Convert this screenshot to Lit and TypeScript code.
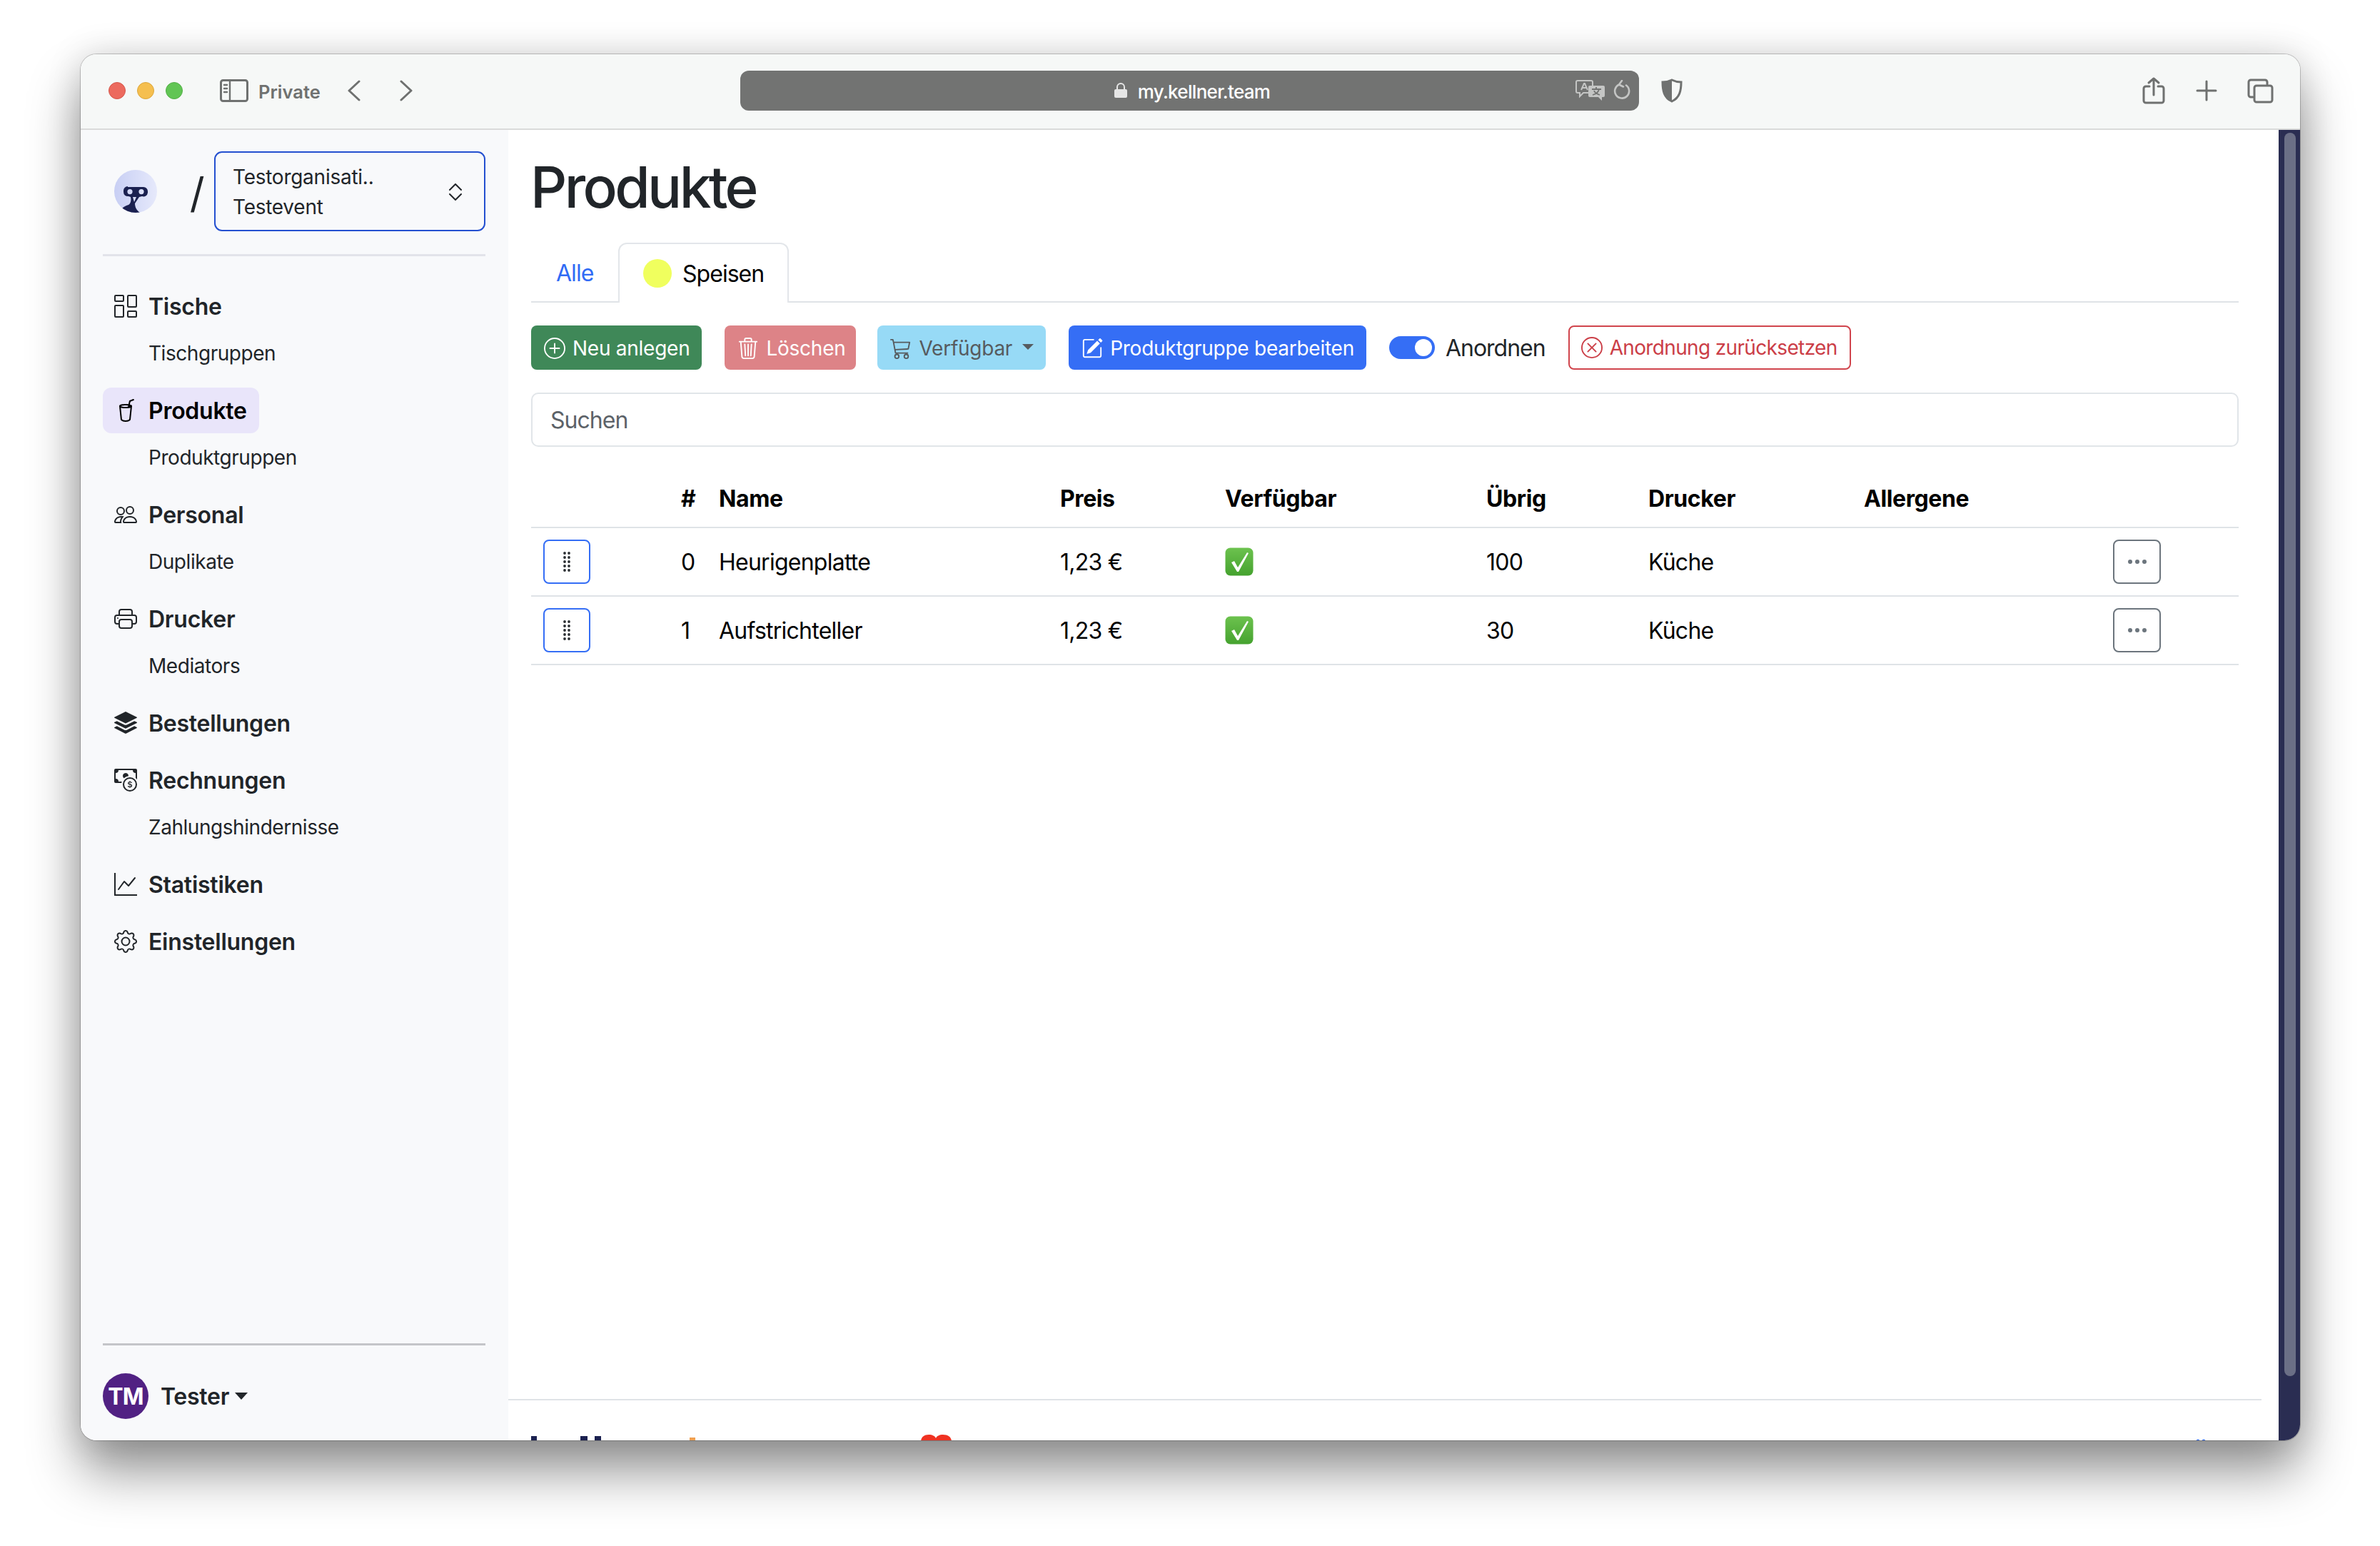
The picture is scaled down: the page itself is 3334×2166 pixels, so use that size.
import { LitElement, html, css, svg } from "lit";
import { customElement } from "lit/decorators.js";

const I: Record<string, string[]> = {
  gap: ["M6 1v3H1V1h5zM1 0a1 1 0 0 0-1 1v3a1 1 0 0 0 1 1h5a1 1 0 0 0 1-1V1a1 1 0 0 0-1-1H1zm14 12v3h-5v-3h5zm-5-1a1 1 0 0 0-1 1v3a1 1 0 0 0 1 1h5a1 1 0 0 0 1-1v-3a1 1 0 0 0-1-1h-5zM6 8v7H1V8h5zM1 7a1 1 0 0 0-1 1v7a1 1 0 0 0 1 1h5a1 1 0 0 0 1-1V8a1 1 0 0 0-1-1H1zm14-6v7h-5V1h5zm-5-1a1 1 0 0 0-1 1v7a1 1 0 0 0 1 1h5a1 1 0 0 0 1-1V1a1 1 0 0 0-1-1h-5z"],
  cup: ["M13.902.334a.5.5 0 0 1-.28.65l-2.254.902-.4 1.927c.376.095.715.215.972.367.228.135.56.396.56.82 0 .046-.004.09-.011.132l-.962 9.068a1.28 1.28 0 0 1-.524.93c-.488.34-1.494.87-3.01.87-1.516 0-2.522-.53-3.01-.87a1.28 1.28 0 0 1-.524-.93L3.51 5.132A.78.78 0 0 1 3.5 5c0-.424.332-.685.56-.82.262-.154.607-.276.99-.372C5.824 3.614 6.867 3.5 8 3.5c.712 0 1.389.045 1.985.127l.464-2.215a.5.5 0 0 1 .303-.356l2.5-1a.5.5 0 0 1 .65.278zM9.768 4.607A13.991 13.991 0 0 0 8 4.5c-1.076 0-2.033.11-2.707.278A3.284 3.284 0 0 0 4.645 5c.146.073.362.15.648.222C5.967 5.39 6.924 5.5 8 5.5c.571 0 1.109-.03 1.588-.085l.18-.808zm.292 1.756C9.445 6.45 8.742 6.5 8 6.5c-1.133 0-2.176-.114-2.95-.308a5.514 5.514 0 0 1-.435-.127l.838 8.03c.013.121.06.186.102.215.357.249 1.168.69 2.438.69 1.27 0 2.081-.441 2.438-.69.042-.029.09-.094.102-.215l.852-8.03a5.517 5.517 0 0 1-.435.127 8.88 8.88 0 0 1-.89.17z"],
  people: ["M15 14s1 0 1-1-1-4-5-4-5 3-5 4 1 1 1 1h8zm-7.978-1A.261.261 0 0 1 7 12.996c.001-.264.167-1.03.76-1.72C8.312 10.629 9.282 10 11 10c1.717 0 2.687.63 3.24 1.276.593.69.758 1.457.76 1.72l-.008.002a.274.274 0 0 1-.014.002H7.022zM11 7a2 2 0 1 0 0-4 2 2 0 0 0 0 4zm3-2a3 3 0 1 1-6 0 3 3 0 0 1 6 0zM6.936 9.28a5.88 5.88 0 0 0-1.23-.247A7.35 7.35 0 0 0 5 9c-4 0-5 3-5 4 0 .667.333 1 1 1h4.216A2.238 2.238 0 0 1 5 13c0-1.01.377-2.042 1.09-2.904.243-.294.526-.569.846-.816zM4.92 10A5.493 5.493 0 0 0 4 13H1c0-.26.164-1.03.76-1.724.545-.636 1.492-1.256 3.16-1.275zM1.5 5.5a3 3 0 1 1 6 0 3 3 0 0 1-6 0zm3-2a2 2 0 1 0 0 4 2 2 0 0 0 0-4z"],
  printer: ["M2.5 8a.5.5 0 1 0 0-1 .5.5 0 0 0 0 1z", "M5 1a2 2 0 0 0-2 2v2H2a2 2 0 0 0-2 2v3a2 2 0 0 0 2 2h1v1a2 2 0 0 0 2 2h6a2 2 0 0 0 2-2v-1h1a2 2 0 0 0 2-2V7a2 2 0 0 0-2-2h-1V3a2 2 0 0 0-2-2H5zM4 3a1 1 0 0 1 1-1h6a1 1 0 0 1 1 1v2H4V3zm1 5a2 2 0 0 0-2 2v1H2a1 1 0 0 1-1-1V7a1 1 0 0 1 1-1h12a1 1 0 0 1 1 1v3a1 1 0 0 1-1 1h-1v-1a2 2 0 0 0-2-2H5zm7 2v3a1 1 0 0 1-1 1H5a1 1 0 0 1-1-1v-3a1 1 0 0 1 1-1h6a1 1 0 0 1 1 1z"],
  stack: ["m14.12 10.163 1.715.858c.22.11.22.424 0 .534L8.267 15.34a.598.598 0 0 1-.534 0L.165 11.555a.299.299 0 0 1 0-.534l1.716-.858 5.317 2.659c.505.252 1.1.252 1.604 0l5.317-2.66zM7.733.063a.598.598 0 0 1 .534 0l7.568 3.784a.3.3 0 0 1 0 .535L8.267 8.165a.598.598 0 0 1-.534 0L.165 4.382a.299.299 0 0 1 0-.535L7.733.063z", "m14.12 6.576 1.715.858c.22.11.22.424 0 .534l-7.568 3.784a.598.598 0 0 1-.534 0L.165 7.968a.299.299 0 0 1 0-.534l1.716-.858 5.317 2.659c.505.252 1.1.252 1.604 0l5.317-2.659z"],
  coin: ["M11 15a4 4 0 1 0 0-8 4 4 0 0 0 0 8zm5-4a5 5 0 1 1-10 0 5 5 0 0 1 10 0z", "M9.438 11.944c.047.596.518 1.06 1.363 1.116v.44h.375v-.443c.875-.061 1.386-.529 1.386-1.207 0-.618-.39-.936-1.09-1.1l-.296-.07v-1.2c.376.043.614.248.671.532h.658c-.047-.575-.54-1.024-1.329-1.073V8.5h-.375v.45c-.747.073-1.255.522-1.255 1.158 0 .562.378.92 1.007 1.066l.248.061v1.272c-.384-.058-.639-.27-.696-.563h-.668zm1.36-1.354c-.369-.085-.569-.26-.569-.522 0-.294.216-.514.572-.578v1.1h-.003zm.432.746c.449.104.655.272.655.569 0 .339-.257.571-.709.614v-1.195l.054.012z", "M1 0a1 1 0 0 0-1 1v8a1 1 0 0 0 1 1h4.083c.058-.344.145-.678.258-1H3a2 2 0 0 0-2-2V3a2 2 0 0 0 2-2h10a2 2 0 0 0 2 2v3.528c.38.34.717.728 1 1.154V1a1 1 0 0 0-1-1H1z", "M9.998 5.083 10 5a2 2 0 1 0-3.132 1.65 5.982 5.982 0 0 1 3.13-1.567z"],
  graph: ["M0 0h1v15h15v1H0V0Zm14.817 3.113a.5.5 0 0 1 .07.704l-4.5 5.5a.5.5 0 0 1-.74.037L7.06 6.767l-3.656 5.027a.5.5 0 0 1-.808-.588l4-5.5a.5.5 0 0 1 .758-.06l2.609 2.61 4.15-5.073a.5.5 0 0 1 .704-.07Z"],
  gear: ["M8 4.754a3.246 3.246 0 1 0 0 6.492 3.246 3.246 0 0 0 0-6.492zM5.754 8a2.246 2.246 0 1 1 4.492 0 2.246 2.246 0 0 1-4.492 0z", "M9.796 1.343c-.527-1.79-3.065-1.79-3.592 0l-.094.319a.873.873 0 0 1-1.255.52l-.292-.16c-1.64-.892-3.433.902-2.54 2.541l.159.292a.873.873 0 0 1-.52 1.255l-.319.094c-1.79.527-1.79 3.065 0 3.592l.319.094a.873.873 0 0 1 .52 1.255l-.16.292c-.892 1.64.901 3.434 2.541 2.54l.292-.159a.873.873 0 0 1 1.255.52l.094.319c.527 1.79 3.065 1.79 3.592 0l.094-.319a.873.873 0 0 1 1.255-.52l.292.16c1.64.893 3.434-.902 2.54-2.541l-.159-.292a.873.873 0 0 1 .52-1.255l.319-.094c1.79-.527 1.79-3.065 0-3.592l-.319-.094a.873.873 0 0 1-.52-1.255l.16-.292c.893-1.64-.902-3.433-2.541-2.54l-.292.159a.873.873 0 0 1-1.255-.52l-.094-.319zm-2.633.283c.246-.835 1.428-.835 1.674 0l.094.319a1.873 1.873 0 0 0 2.693 1.115l.291-.16c.764-.415 1.6.42 1.184 1.185l-.159.292a1.873 1.873 0 0 0 1.116 2.692l.318.094c.835.246.835 1.428 0 1.674l-.319.094a1.873 1.873 0 0 0-1.115 2.693l.16.291c.415.764-.42 1.6-1.185 1.184l-.291-.159a1.873 1.873 0 0 0-2.693 1.116l-.094.318c-.246.835-1.428.835-1.674 0l-.094-.319a1.873 1.873 0 0 0-2.692-1.115l-.292.16c-.764.415-1.6-.42-1.184-1.185l.159-.291A1.873 1.873 0 0 0 1.945 8.93l-.319-.094c-.835-.246-.835-1.428 0-1.674l.319-.094A1.873 1.873 0 0 0 3.06 4.377l-.16-.292c-.415-.764.42-1.6 1.185-1.184l.292.159a1.873 1.873 0 0 0 2.692-1.115l.094-.319z"],
  plus: ["M8 15A7 7 0 1 1 8 1a7 7 0 0 1 0 14zm0 1A8 8 0 1 0 8 0a8 8 0 0 0 0 16z", "M8 4a.5.5 0 0 1 .5.5v3h3a.5.5 0 0 1 0 1h-3v3a.5.5 0 0 1-1 0v-3h-3a.5.5 0 0 1 0-1h3v-3A.5.5 0 0 1 8 4z"],
  trash: ["M6.5 1h3a.5.5 0 0 1 .5.5v1H6v-1a.5.5 0 0 1 .5-.5ZM11 2.5v-1A1.5 1.5 0 0 0 9.5 0h-3A1.5 1.5 0 0 0 5 1.5v1H2.506a.58.58 0 0 0-.01 0H1.5a.5.5 0 0 0 0 1h.538l.853 10.66A2 2 0 0 0 4.885 16h6.23a2 2 0 0 0 1.994-1.84l.853-10.66h.538a.5.5 0 0 0 0-1h-.995a.59.59 0 0 0-.01 0H11Zm1.958 1-.846 10.58a1 1 0 0 1-.997.92h-6.23a1 1 0 0 1-.997-.92L3.042 3.5h9.916Zm-7.487 1a.5.5 0 0 1 .528.47l.5 8.5a.5.5 0 0 1-.998.06L5 5.03a.5.5 0 0 1 .47-.53Zm5.058 0a.5.5 0 0 1 .47.53l-.5 8.5a.5.5 0 1 1-.998-.06l.5-8.5a.5.5 0 0 1 .528-.47ZM8 4.5a.5.5 0 0 1 .5.5v8.5a.5.5 0 0 1-1 0V5a.5.5 0 0 1 .5-.5Z"],
  cart: ["M0 1.5A.5.5 0 0 1 .5 1H2a.5.5 0 0 1 .485.379L2.89 3H14.5a.5.5 0 0 1 .49.598l-1 5a.5.5 0 0 1-.465.401l-9.397.472L4.415 11H13a.5.5 0 0 1 0 1H4a.5.5 0 0 1-.491-.408L2.01 3.607 1.61 2H.5a.5.5 0 0 1-.5-.5zM3.102 4l.84 4.479 9.144-.459L13.89 4H3.102zM5 12a2 2 0 1 0 0 4 2 2 0 0 0 0-4zm7 0a2 2 0 1 0 0 4 2 2 0 0 0 0-4zm-7 1a1 1 0 1 1 0 2 1 1 0 0 1 0-2zm7 0a1 1 0 1 1 0 2 1 1 0 0 1 0-2z"],
  pencil: ["M15.502 1.94a.5.5 0 0 1 0 .706L14.459 3.69l-2-2L13.502.646a.5.5 0 0 1 .707 0l1.293 1.293zm-1.75 2.456-2-2L4.939 9.21a.5.5 0 0 0-.121.196l-.805 2.414a.25.25 0 0 0 .316.316l2.414-.805a.5.5 0 0 0 .196-.12l6.813-6.814z", "M1 13.5A1.5 1.5 0 0 0 2.5 15h11a1.5 1.5 0 0 0 1.5-1.5v-6a.5.5 0 0 0-1 0v6a.5.5 0 0 1-.5.5h-11a.5.5 0 0 1-.5-.5v-11a.5.5 0 0 1 .5-.5H9a.5.5 0 0 0 0-1H2.5A1.5 1.5 0 0 0 1 2.5v11z"],
  xc: ["M8 15A7 7 0 1 1 8 1a7 7 0 0 1 0 14zm0 1A8 8 0 1 0 8 0a8 8 0 0 0 0 16z", "M4.646 4.646a.5.5 0 0 1 .708 0L8 7.293l2.646-2.647a.5.5 0 0 1 .708.708L8.707 8l2.647 2.646a.5.5 0 0 1-.708.708L8 8.707l-2.646 2.647a.5.5 0 0 1-.708-.708L7.293 8 4.646 5.354a.5.5 0 0 1 0-.708z"],
  dots: ["M3 9.5a1.5 1.5 0 1 1 0-3 1.5 1.5 0 0 1 0 3zm5 0a1.5 1.5 0 1 1 0-3 1.5 1.5 0 0 1 0 3zm5 0a1.5 1.5 0 1 1 0-3 1.5 1.5 0 0 1 0 3z"],
};

const bi = (n: string, cls = "ic") =>
  html`<svg class=${cls} viewBox="0 0 16 16" fill="currentColor">${I[n].map((d) => svg`<path d=${d} fill-rule="evenodd"></path>`)}</svg>`;

const NAV: { icon: string; label: string; sub?: string; active?: boolean }[] = [
  { icon: "gap", label: "Tische", sub: "Tischgruppen" },
  { icon: "cup", label: "Produkte", sub: "Produktgruppen", active: true },
  { icon: "people", label: "Personal", sub: "Duplikate" },
  { icon: "printer", label: "Drucker", sub: "Mediators" },
  { icon: "stack", label: "Bestellungen" },
  { icon: "coin", label: "Rechnungen", sub: "Zahlungshindernisse" },
  { icon: "graph", label: "Statistiken" },
  { icon: "gear", label: "Einstellungen" },
];

const ROWS = [
  { n: "0", name: "Heurigenplatte", left: "100" },
  { n: "1", name: "Aufstrichteller", left: "30" },
];

const checkIcon = html`<svg class="check" viewBox="0 0 40 40">
  <defs><linearGradient id="g" x1="0" y1="0" x2="0" y2="1"><stop offset="0" stop-color="#6cc24e"></stop><stop offset="1" stop-color="#45a22f"></stop></linearGradient></defs>
  <rect x="0.5" y="0.5" width="39" height="39" rx="7" fill="url(#g)"></rect>
  <path d="M9 21 L13 19 L18 28 L31 7 L33 8 L19 34 L17 34 Z" fill="#fff"></path>
</svg>`;

const gripIcon = html`<svg class="grip" viewBox="0 0 10 28" fill="#2b2f33">
  ${[2, 8, 14, 20, 26].map((y) => svg`<circle cx="2" cy=${y} r="1.9"></circle><circle cx="8" cy=${y} r="1.9"></circle>`)}
</svg>`;

@customElement("app-root")
export class AppRoot extends LitElement {
  static styles = css`
    :host { display: block; background: #fff; font-family: Inter, "Liberation Sans", sans-serif; color: #212529; letter-spacing: -0.256px; }
    * { box-sizing: border-box; }
    .page { width: 3334px; height: 2166px; padding: 76px 112px 148px 113px; overflow: hidden; }
    .win { width: 3109px; height: 1942px; border-radius: 22px; overflow: hidden; display: flex; flex-direction: column; background: #fff;
      box-shadow: 0 0 0 1px rgba(0,0,0,.2), 0 44px 72px rgba(0,0,0,.42), 0 0 50px rgba(0,0,0,.14); }
    .bar { height: 106px; flex: none; background: #f6f8f7; border-bottom: 2px solid #dadbda; display: flex; align-items: center; color: #6f7170; padding-bottom: 2px; }
    .lights { display: flex; gap: 16px; margin-left: 39px; }
    .light { width: 24px; height: 24px; border-radius: 50%; }
    .r { background: #ec6a5e; border: 1px solid #d5574c; }
    .y { background: #f5bf4f; border: 1px solid #dca63c; }
    .g { background: #61c554; border: 1px solid #53ae47; }
    .tb { flex: none; display: block; fill: none; stroke: #6f7170; stroke-width: 3; stroke-linecap: round; stroke-linejoin: round; }
    .side-ic { width: 40px; height: 32px; margin-left: 52px; }
    .private { font-size: 25.5px; font-weight: 600; margin: 2px 0 0 14px; width: 88px; white-space: nowrap; letter-spacing: 0; }
    .chev { width: 20px; height: 30px; }
    .back { margin-left: 36px; }
    .fwd { margin-left: 53px; }
    .url { width: 1259px; height: 56px; margin-left: 458px; background: #727372; border-radius: 12px; display: grid; grid-template-columns: 1fr auto 1fr; align-items: center; color: #fff; }
    .url-c { display: flex; align-items: center; gap: 14px; margin-left: 6px; font-size: 26px; font-weight: 500; letter-spacing: -0.7px; grid-column: 2; }
    .url-c span { padding-top: 2px; }
    .lock { width: 20px; height: 24px; }
    .url-r { display: flex; justify-content: flex-end; align-items: center; gap: 10px; padding-right: 11px; }
    .tr { width: 42px; height: 30px; }
    .rl { width: 26px; height: 30px; fill: none; stroke: #c4c5c4; stroke-width: 2.6; stroke-linecap: round; stroke-linejoin: round; }
    .shield { width: 30px; height: 34px; margin-left: 31px; }
    .share { width: 32px; height: 38px; margin-left: 644px; }
    .addt { width: 30px; height: 30px; margin-left: 43px; }
    .tabs-ic { width: 37px; height: 35px; margin-left: 42px; }

    .body { flex: 1; min-height: 0; display: flex; }
    .side { width: 599px; flex: none; background: #f8f9fb; padding: 30px 32px 30px 31px; display: flex; flex-direction: column; }
    .org { display: flex; align-items: center; height: 112px; flex: none; }
    .logo { width: 60px; height: 60px; margin-left: 16px; flex: none; display: block; }
    .slash { width: 80px; padding: 4px 0 0 32px; text-align: center; font-size: 58px; font-weight: 400; line-height: 1; color: #212529; }
    .sel { width: 380px; height: 112px; border: 2.5px solid #2450d0; border-radius: 11px; padding: 13px 0 0 24px; display: flex; justify-content: space-between; font-size: 28px; line-height: 42px; color: #212529; }
    .updown { width: 20px; height: 24px; margin: 30px 30px 0 0; fill: none; stroke: #212529; stroke-width: 2; stroke-linecap: round; stroke-linejoin: round; }
    .rule { height: 3px; background: #e2e3ea; margin-top: 32px; flex: none; }
    nav { margin-top: 38px; display: flex; flex-direction: column; gap: 16px; }
    .head { display: flex; width: fit-content; align-items: center; gap: 16px; height: 64px; padding: 0 17px 0 16px; border-radius: 12px; font-size: 32px; font-weight: 600; color: #212529; }
    .head.on { background: #e9e5fa; color: #000; }
    .ic { width: 32px; height: 32px; flex: none; display: block; }
    .sub { height: 64px; margin-top: 2px; line-height: 64px; font-size: 28px; letter-spacing: -0.45px; padding-left: 64px; color: #212529; }
    .user { margin-top: auto; border-top: 3px solid #c4c5c9; padding-top: 39px; display: flex; align-items: center; gap: 17px; font-size: 32px; font-weight: 600; }
    .av { width: 64px; height: 64px; border-radius: 50%; background: #512183; color: #fff; display: flex; align-items: center; justify-content: center; flex: none; font-weight: 700; letter-spacing: -0.03em; }
    .name { display: flex; align-items: center; gap: 8px; }
    .caret { width: 0; height: 0; border-left: 9.5px solid transparent; border-right: 9.5px solid transparent; border-top: 10px solid currentColor; }

    main { flex: 1; min-width: 0; display: flex; flex-direction: column; overflow: hidden; }
    .content { flex: 1; padding: 32px 56px 0 32px; }
    h1 { margin: 0 0 30px -1px; font-size: 80px; line-height: 96px; font-weight: 500; letter-spacing: -3.6px; color: #212529; }
    .tabs { display: flex; border-bottom: 2px solid #dfe3e7; height: 84px; }
    .tab { height: 84px; display: flex; align-items: center; font-size: 32px; letter-spacing: -0.03em; }
    .all { width: 118px; padding-left: 35px; color: #306bf5; }
    .spe { margin-left: 4px; width: 239px; padding: 0 32px 0 33px; gap: 15px; color: #000; background: #fff; border: 2px solid #e3e6ea; border-bottom: none; border-radius: 12px 12px 0 0; }
    .dot { width: 40px; height: 40px; border-radius: 50%; background: #f0ff5e; flex: none; }
    .acts { display: flex; align-items: center; gap: 32px; margin-top: 32px; height: 62px; }
    .btn { height: 62px; display: flex; align-items: center; gap: 10px; padding: 1px 17px 0 18px; border-radius: 8px; font-size: 28px; white-space: nowrap; color: #fff; }
    .btn .ic { width: 30px; height: 30px; }
    .new { background: #3f8858; }
    .del { background: #dd8387; padding-right: 15px; }
    .av-btn { background: #97daf6; color: #565b5f; margin-left: -2px; }
    .edit { background: #356ef5; }
    .bcaret { width: 0; height: 0; border-left: 8px solid transparent; border-right: 8px solid transparent; border-top: 8px solid #565b5f; margin: -4px 0 0 4px; }
    .switch { display: flex; align-items: center; gap: 15px; font-size: 32px; letter-spacing: -1px; color: #212529; }
    .track { width: 64px; height: 32px; border-radius: 16px; background: #356ef5; display: flex; align-items: center; justify-content: flex-end; padding-right: 4px; }
    .knob { width: 24px; height: 24px; border-radius: 50%; background: #fff; }
    .reset { border: 2px solid #d0454d; color: #cb3e47; background: #fff; padding: 0 17px 0 16px; letter-spacing: -0.65px; }
    .search { margin-top: 32px; height: 76px; border: 2px solid #e1e5e9; border-radius: 10px; display: flex; align-items: center; padding-left: 25px; font-size: 32px; letter-spacing: -0.03em; color: #5c6268; }
    .table { margin-top: 32px; }
    .row { display: grid; grid-template-columns: 193px 54px 477px 231px 366px 227px 302px 349px 193px; border-bottom: 2px solid #dfe3e7; align-items: center; color: #000; font-size: 32px; letter-spacing: -0.75px; height: 96px; }
    .row > div { padding-left: 17px; }
    .row > .nm { padding-left: 16px; }
    .thead { height: 82px; font-weight: 700; letter-spacing: -0.4px; }
    .ibtn { width: 66px; height: 62px; border-radius: 8px; border: 2.5px solid #356ef5; display: flex; align-items: center; justify-content: center; }
    .ibtn.more { border-color: #6c757d; color: #6c757d; width: 67px; }
    .grip { width: 10px; height: 28px; display: block; }
    .check { width: 40px; height: 40px; display: block; }
    footer { height: 58px; flex: none; margin-right: 24px; border-top: 2px solid #dfe3e7; overflow: hidden; }
    .marks { display: block; width: 2456px; height: 58px; }
    .scroll { width: 30px; flex: none; background: #2a2d52; padding: 4px 6px 90px 8px; display: flex; }
    .thumb { flex: 1; background: #6b6f86; border-radius: 8px; }
  `;

  private chrome() {
    return html`<div class="bar">
      <div class="lights"><div class="light r"></div><div class="light y"></div><div class="light g"></div></div>
      <svg class="tb side-ic" viewBox="0 0 40 32"><rect x="1.5" y="1.5" width="37" height="29" rx="3"></rect><path d="M14 2v28M6 8h4M6 13h4M6 18h4" stroke-width="2.4"></path></svg>
      <div class="private">Private</div>
      <svg class="tb chev back" viewBox="0 0 20 30"><path d="M17 2 3 15l14 13"></path></svg>
      <svg class="tb chev fwd" viewBox="0 0 20 30"><path d="M3 2l14 13L3 28"></path></svg>
      <div class="url">
        <div class="url-c">
          <svg class="lock" viewBox="0 0 20 24" fill="#e6e6e6"><path d="M3 10h14a2 2 0 0 1 2 2v8a2 2 0 0 1-2 2H3a2 2 0 0 1-2-2v-8a2 2 0 0 1 2-2z"></path><path d="M5 11V7a5 5 0 0 1 10 0v4" fill="none" stroke="#e6e6e6" stroke-width="2"></path></svg>
          <span>my.kellner.team</span>
        </div>
        <div class="url-r">
          <svg class="tr" viewBox="0 0 42 30">
            <path d="M3 1h19a2 2 0 0 1 2 2v13a2 2 0 0 1-2 2H11l-5 5v-5H3a2 2 0 0 1-2-2V3a2 2 0 0 1 2-2z" fill="none" stroke="#c4c5c4" stroke-width="2"></path>
            <path d="M8 14l4-9h1l4 9M10 11h5" fill="none" stroke="#c4c5c4" stroke-width="2"></path>
            <path d="M20 8h19a2 2 0 0 1 2 2v12a2 2 0 0 1-2 2h-2v5l-5-5H20a2 2 0 0 1-2-2V10a2 2 0 0 1 2-2z" fill="#c4c5c4"></path>
            <path d="M23 13h13M29 10v3M33 13c-1 5-5 7-9 8M26 15c1 3 5 5 8 6" fill="none" stroke="#727372" stroke-width="1.8"></path>
          </svg>
          <svg class="rl" viewBox="0 0 26 30"><path d="M9 6.500a10 10 0 1 0 10 1M13 1l-4 5.500 6 3"></path></svg>
        </div>
      </div>
      <svg class="shield" viewBox="0 0 30 34"><path d="M15 2c4 2 8 3 13 3 0 12-2 22-13 27C4 27 2 17 2 5c5 0 9-1 13-3z" fill="none" stroke="#6f7170" stroke-width="3"></path><path d="M15 2c-4 2-8 3-13 3 0 12 2 22 13 27z" fill="#6f7170"></path></svg>
      <svg class="tb share" viewBox="0 0 32 38"><path d="M10 13H5a3 3 0 0 0-3 3v17a3 3 0 0 0 3 3h22a3 3 0 0 0 3-3V16a3 3 0 0 0-3-3h-5M16 25V2M9 8l7-6 7 6"></path></svg>
      <svg class="tb addt" viewBox="0 0 30 30"><path d="M15 2v26M2 15h26"></path></svg>
      <svg class="tb tabs-ic" viewBox="0 0 37 35"><path d="M8 26H5a3 3 0 0 1-3-3V5a3 3 0 0 1 3-3h20a3 3 0 0 1 3 3v3"></path><rect x="10" y="10" width="25" height="23" rx="3"></rect></svg>
    </div>`;
  }

  private sidebar() {
    return html`<aside class="side">
      <div class="org">
        <svg class="logo" viewBox="0 0 60 60">
          <defs>
            <linearGradient id="lg" x1="0" y1="0" x2="1" y2="0"><stop offset="0" stop-color="#c8cff4"></stop><stop offset="1" stop-color="#e6e9fb"></stop></linearGradient>
            <clipPath id="lc"><circle cx="30" cy="30" r="30"></circle></clipPath>
          </defs>
          <circle cx="30" cy="30" r="30" fill="url(#lg)"></circle>
          <g clip-path="url(#lc)" fill="#1b2150">
            <path fill-rule="evenodd" d="M19 24h22a6 6 0 0 1 6 6v2a6 6 0 0 1-8 5l-4 1-6 9c0 5 2 9 7 13H6c2-5 8-9 14-11 3-2 4-6 3-11l-3-1a6 6 0 0 1-7-6v-2a6 6 0 0 1 6-6zm3 3a3.600 3.600 0 1 0 0 7.200a3.600 3.600 0 0 0 0-7.200zm16 0a3.600 3.600 0 1 0 0 7.200a3.600 3.600 0 0 0 0-7.200zM26 38l2 7 3-7z"></path>
          </g>
        </svg>
        <div class="slash">/</div>
        <div class="sel">
          <div>Testorganisati..<br />Testevent</div>
          <svg class="updown" viewBox="0 0 20 24"><path d="M2 9l8-8 8 8M2 15l8 8 8-8"></path></svg>
        </div>
      </div>
      <div class="rule"></div>
      <nav>
        ${NAV.map((n) => html`<div>
          <div class="head ${n.active ? "on" : ""}">${bi(n.icon)}<span>${n.label}</span></div>
          ${n.sub ? html`<div class="sub">${n.sub}</div>` : ""}
        </div>`)}
      </nav>
      <div class="user">
        <div class="av">TM</div>
        <div class="name">Tester<span class="caret"></span></div>
      </div>
    </aside>`;
  }

  private table() {
    return html`<div class="table">
      <div class="row thead">
        <div></div><div>#</div><div class="nm">Name</div><div>Preis</div><div>Verfügbar</div><div>Übrig</div><div>Drucker</div><div>Allergene</div><div></div>
      </div>
      ${ROWS.map((r) => html`<div class="row">
        <div><div class="ibtn">${gripIcon}</div></div>
        <div>${r.n}</div>
        <div class="nm">${r.name}</div>
        <div>1,23 €</div>
        <div>${checkIcon}</div>
        <div>${r.left}</div>
        <div>Küche</div>
        <div></div>
        <div><div class="ibtn more">${bi("dots")}</div></div>
      </div>`)}
    </div>`;
  }

  render() {
    return html`<div class="page"><div class="win">
      ${this.chrome()}
      <div class="body">
        ${this.sidebar()}
        <main>
          <div class="content">
            <h1>Produkte</h1>
            <div class="tabs">
              <div class="tab all">Alle</div>
              <div class="tab spe"><span class="dot"></span><span>Speisen</span></div>
            </div>
            <div class="acts">
              <div class="btn new">${bi("plus")}<span>Neu anlegen</span></div>
              <div class="btn del">${bi("trash")}<span>Löschen</span></div>
              <div class="btn av-btn">${bi("cart")}<span>Verfügbar</span><span class="bcaret"></span></div>
              <div class="btn edit">${bi("pencil")}<span>Produktgruppe bearbeiten</span></div>
              <div class="switch"><span class="track"><span class="knob"></span></span><span>Anordnen</span></div>
              <div class="btn reset">${bi("xc")}<span>Anordnung zurücksetzen</span></div>
            </div>
            <div class="search">Suchen</div>
            ${this.table()}
          </div>
          <footer>
            <svg class="marks" viewBox="0 0 2456 58">
              <rect x="32" y="50" width="8" height="8" fill="#1b2150"></rect>
              <rect x="101" y="50" width="10" height="8" fill="#1b2150"></rect>
              <rect x="121" y="50" width="9" height="8" fill="#1b2150"></rect>
              <rect x="254" y="52" width="8" height="6" fill="#f0a050"></rect>
              <path d="M578 58c0-6 4-10 11-10 5 0 9 2 10 5 1-3 5-5 10-5 8 0 12 4 12 10z" fill="#ef3222"></path>
              <circle cx="2367" cy="57" r="2.500" fill="#356ef5"></circle>
              <circle cx="2375" cy="57" r="2.500" fill="#356ef5"></circle>
            </svg>
          </footer>
        </main>
        <div class="scroll"><div class="thumb"></div></div>
      </div>
    </div></div>`;
  }
}
